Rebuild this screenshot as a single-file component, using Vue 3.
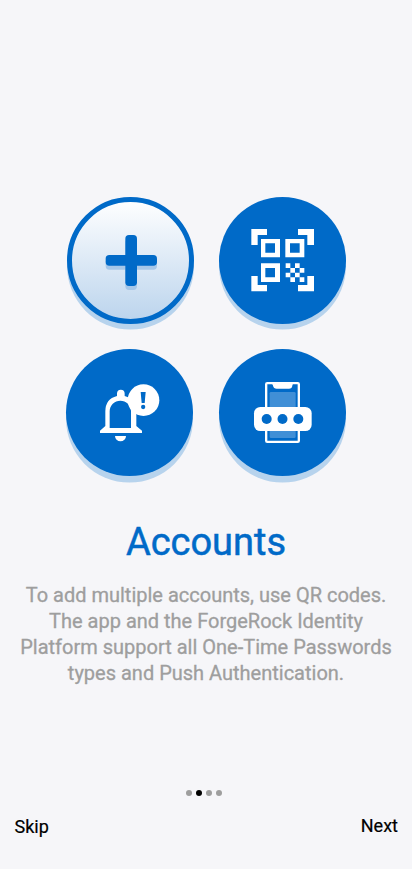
<script setup>
const dots = [false, true, false, false]
</script>

<template>
  <main class="screen">
    <section class="art">
      <svg class="tile" viewBox="0 0 420 435">
        <defs>
          <linearGradient id="face" x1="0" y1="0" x2="0" y2="1">
            <stop offset="0" stop-color="#ffffff" />
            <stop offset="1" stop-color="#bbd4ed" />
          </linearGradient>
        </defs>
        <circle cx="211.5" cy="228" r="190.5" fill="#b7d3ed" />
        <circle cx="211.5" cy="211.5" r="183" fill="url(#face)" stroke="#006ac8" stroke-width="15" />
        <g fill="#a5c7e9">
          <rect x="137" y="207" width="154" height="32" rx="11" />
          <rect x="196" y="147" width="35" height="153" rx="11" />
        </g>
        <g fill="#006ac8">
          <rect x="137" y="195" width="154" height="32" rx="11" />
          <rect x="196" y="135" width="35" height="153" rx="11" />
        </g>
      </svg>

      <svg class="tile" viewBox="0 0 420 435">
        <circle cx="211.5" cy="228" r="190.5" fill="#b7d3ed" />
        <circle cx="211.5" cy="211.5" r="190.5" fill="#006ac8" />
        <g fill="#fff" fill-rule="evenodd">
          <path d="M118 117h47v18h-28v30h-19zM306 117h-48v18h28v30h20zM118 304h47v-19h-28v-27h-19zM306 304h-48v-19h28v-27h20z" />
          <path d="M147 147h57v55h-57zm13 13v28h29v-28z" />
          <path d="M220 147h57v55h-57zm14 13v28h29v-28z" />
          <path d="M147 220h57v56h-57zm13 14v28h29v-28z" />
          <path d="M221 220h14v14h-14zM249 220h14v14h-14zM235 234h14v14h-14zM263 234h14v14h-14zM221 248h14v14h-14zM249 248h14v14h-14zM235 262h14v14h-14zM263 262h14v14h-14z" />
        </g>
      </svg>

      <svg class="tile" viewBox="0 0 420 435">
        <circle cx="208.5" cy="228" r="190.5" fill="#b7d3ed" />
        <circle cx="208.5" cy="208.5" r="190.5" fill="#006ac8" />
        <path fill="#fff" fill-rule="evenodd" d="M171 159v-7a11.500 11.500 0 0 1 23 0v7q35 9 35 46v44l17 14v7H120v-7l16-14v-44q0-37 35-46zM149 255h64v-50a32 32 0 0 0-64 0z" />
        <path fill="#fff" d="M165 279h33a16.500 16 0 0 1-33 0z" />
        <circle cx="250.500" cy="171.500" r="47.500" fill="#fff" />
        <path fill="#006ac8" d="M242 147h15l-3 33h-9z" />
        <circle cx="249.500" cy="192" r="6.500" fill="#006ac8" />
      </svg>

      <svg class="tile" viewBox="0 0 420 435">
        <circle cx="211.5" cy="228" r="190.5" fill="#b7d3ed" />
        <circle cx="211.5" cy="208.5" r="190.5" fill="#006ac8" />
        <rect x="162.500" y="120.500" width="98" height="176" rx="3" fill="none" stroke="#fff" stroke-width="7" />
        <path fill="#fff" d="M180 123h63q-2 2-2 5-1 9-10 9h-37q-9 0-11-9 0-3-3-5z" />
        <rect x="173" y="147" width="78" height="138" rx="4" fill="#408fd6" />
        <rect x="126" y="192" width="173" height="72" rx="19" fill="#fff" />
        <g fill="#006ac8">
          <circle cx="164" cy="228" r="15" />
          <circle cx="211.500" cy="228" r="15" />
          <circle cx="259" cy="228" r="15" />
        </g>
      </svg>
    </section>

    <h1 class="title">Accounts</h1>
    <p class="copy">
      To add multiple accounts, use QR codes.<br />
      The app and the ForgeRock Identity<br />
      Platform support all One-Time Passwords<br />
      types and Push Authentication.
    </p>

    <div class="dots">
      <span v-for="(active, i) in dots" :key="i" class="dot" :class="{ active }"></span>
    </div>
    <nav class="nav">
      <button class="action skip">Skip</button>
      <button class="action">Next</button>
    </nav>
  </main>
</template>

<style>
body {
  background: #f6f6f9;
}
</style>

<style scoped>
.screen {
  box-sizing: border-box;
  height: 869px;
  padding-top: 190px;
  display: flex;
  flex-direction: column;
  background: #f6f6f9;
  font-family: Roboto, sans-serif;
  overflow: hidden;
}
.art {
  display: grid;
  grid-template-columns: 140px 140px;
  gap: 8px 12px;
  justify-content: center;
}
.tile {
  display: block;
  width: 140px;
  height: 145px;
}
.title {
  margin: 30px 0 0;
  height: 48px;
  line-height: 48px;
  font-size: 38px;
  font-weight: 400;
  text-align: center;
  color: #006ac8;
  -webkit-text-stroke: 0.5px #006ac8;
}
.copy {
  margin: 16px 0 0;
  font-size: 20px;
  line-height: 26px;
  text-align: center;
  white-space: nowrap;
  color: #9e9e9e;
  -webkit-text-stroke: 0.3px #9e9e9e;
}
.dots {
  display: flex;
  justify-content: center;
  gap: 4px;
  margin: 104px 4px 0 0;
}
.dot {
  width: 6px;
  height: 6px;
  border-radius: 50%;
  background: #9e9e9e;
}
.dot.active {
  background: #000;
}
.nav {
  display: flex;
  align-items: flex-start;
  justify-content: space-between;
  margin-top: 18px;
  padding: 0 14px 0 14.5px;
}
.action {
  padding: 0;
  border: 0;
  background: none;
  font: 400 18px/24px Roboto, sans-serif;
  color: #000;
  -webkit-text-stroke: 0.2px #000;
}
.skip {
  padding-top: 1px;
}
</style>
